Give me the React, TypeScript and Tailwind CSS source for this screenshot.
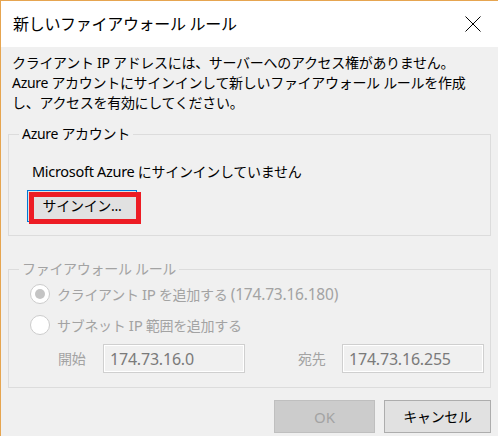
import React from "react";

const font = {
  fontFamily: '"Noto Sans", "Noto Sans CJK JP", sans-serif',
};

function CloseIcon() {
  return (
    <svg width="16" height="16" viewBox="0 0 16 16" aria-hidden="true">
      <path d="M0.5 0.5 L15.5 15.5 M15.5 0.5 L0.5 15.5" stroke="#000" strokeWidth="1" fill="none" />
    </svg>
  );
}

type RadioProps = {
  checked?: boolean;
  children: React.ReactNode;
};

function Radio({ checked, children }: RadioProps) {
  return (
    <div className="flex h-[20px] items-center">
      <span className="flex h-[20px] w-[20px] items-center justify-center rounded-full border border-[#cccccc] bg-white">
        {checked ? <span className="h-[10px] w-[10px] rounded-full bg-[#c4c4c4]" /> : null}
      </span>
      <span className="ml-[7px] text-[#a3a3a3]">{children}</span>
    </div>
  );
}

function AddressInput({ value }: { value: string }) {
  return (
    <div className="flex h-[29px] items-center border border-[#cfcfcf] bg-[#f0f0f0] pl-[6px] text-[16px] tracking-[-0.2px] text-[#7a7a7a] shadow-[inset_0_0_0_1px_#ffffff]">
      {value}
    </div>
  );
}

export default function App() {
  return (
    <div
      className="h-[436px] w-[498px] overflow-hidden border-t border-l border-[#e6a550] bg-[#f0f0f0] text-[14px] leading-[20px] text-black"
      style={font}
    >
      {/* title bar */}
      <div className="flex h-[46px] items-center justify-between bg-white pl-[12px] pr-[17px]">
        <span className="text-[16px] tracking-[-0.3px]">新しいファイアウォール ルール</span>
        <CloseIcon />
      </div>

      <div className="px-[7px]">
        <p className="pl-[4px] pt-[6px] tracking-[-0.3px]">
          クライアント IP アドレスには、サーバーへのアクセス権がありません。
          <br />
          Azure アカウントにサインインして新しいファイアウォール ルールを作成
          <br />
          し、アクセスを有効にしてください。
        </p>

        <fieldset className="mt-[11px] w-[483px] border border-[#dcdcdc] px-0 pb-[13px]">
          <legend className="ml-[10px] px-[3px] leading-[20px] tracking-[-0.3px]">Azure アカウント</legend>
          <div className="pl-[18px] pt-[17px]">
            <div className="ml-[5px] tracking-[-0.3px]">
              <span className="text-[14.5px]">Microsoft Azure</span> にサインインしていません
            </div>
            <div className="relative mt-[8px] h-[32px] w-[110px]">
              <button className="flex h-[32px] w-[110px] items-center justify-center border border-[#0078d7] bg-[#e1e1e1] tracking-[-0.3px]">
                サインイン...
              </button>
              <span className="pointer-events-none absolute left-[2px] top-[2px] h-[32px] w-[112px] border-[5px] border-[#ed1c24]" />
            </div>
          </div>
        </fieldset>

        <fieldset className="mt-[23px] w-[483px] border border-[#dcdcdc] px-0 pb-[14px]">
          <legend className="ml-[10px] px-[3px] leading-[20px] tracking-[-0.3px] text-[#a3a3a3]">
            ファイアウォール ルール
          </legend>
          <div className="pl-[21px] pt-[5px] tracking-[-0.3px]">
            <Radio checked>
              クライアント <span className="text-[15px]">IP</span> を追加する{" "}
              <span className="text-[15.5px] tracking-[-0.2px]">(174.73.16.180)</span>
            </Radio>
            <div className="mt-[11px]">
              <Radio>
                サブネット <span className="text-[15px]">IP</span> 範囲を追加する
              </Radio>
            </div>
            <div className="mt-[9px] flex items-center">
              <span className="ml-[28px] w-[45px] text-[#a3a3a3]">開始</span>
              <div className="w-[142px]">
                <AddressInput value="174.73.16.0" />
              </div>
              <span className="ml-[53px] w-[44px] text-[#a3a3a3]">宛先</span>
              <div className="w-[142px]">
                <AddressInput value="174.73.16.255" />
              </div>
            </div>
          </div>
        </fieldset>

        <div className="mt-[12px] flex justify-end gap-[9px]">
          <button className="flex h-[33px] w-[101px] items-center justify-center border border-[#bfbfbf] bg-[#cccccc] text-[15px] text-[#a3a3a3]">
            OK
          </button>
          <button className="flex h-[33px] w-[107px] items-center justify-center border border-[#adadad] bg-[#e1e1e1] tracking-[-0.3px]">
            キャンセル
          </button>
        </div>
      </div>
    </div>
  );
}
